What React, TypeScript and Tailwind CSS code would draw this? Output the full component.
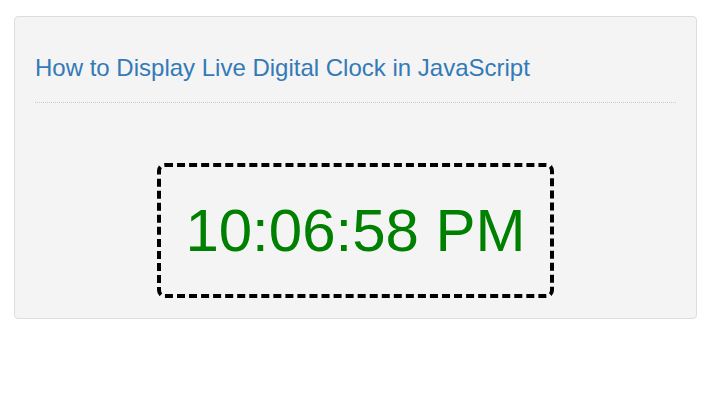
import React from 'react';

export default function App() {
  return (
    <div className="min-h-screen bg-white pt-4 pl-[14px] font-['Liberation_Sans',Arial,sans-serif]">
      {/* Panel */}
      <div className="w-[683px] rounded border border-[#dddddd] bg-[#f4f4f4] px-5 pb-5 pt-5">
        <h3 className="mt-[18px] text-[24px] leading-[26px] text-[#337ab7]">
          How to Display Live Digital Clock in JavaScript
        </h3>
        <hr className="mt-[21px] border-0 border-t border-dotted border-[#cccccc]" />

        {/* Clock */}
        <div className="mt-[60px] flex justify-center">
          <div className="rounded-lg border-4 border-dashed border-black px-6 py-[29px] text-[60px] leading-[69px] text-[#008000]">
            10:06:58 PM
          </div>
        </div>
      </div>
    </div>
  );
}
